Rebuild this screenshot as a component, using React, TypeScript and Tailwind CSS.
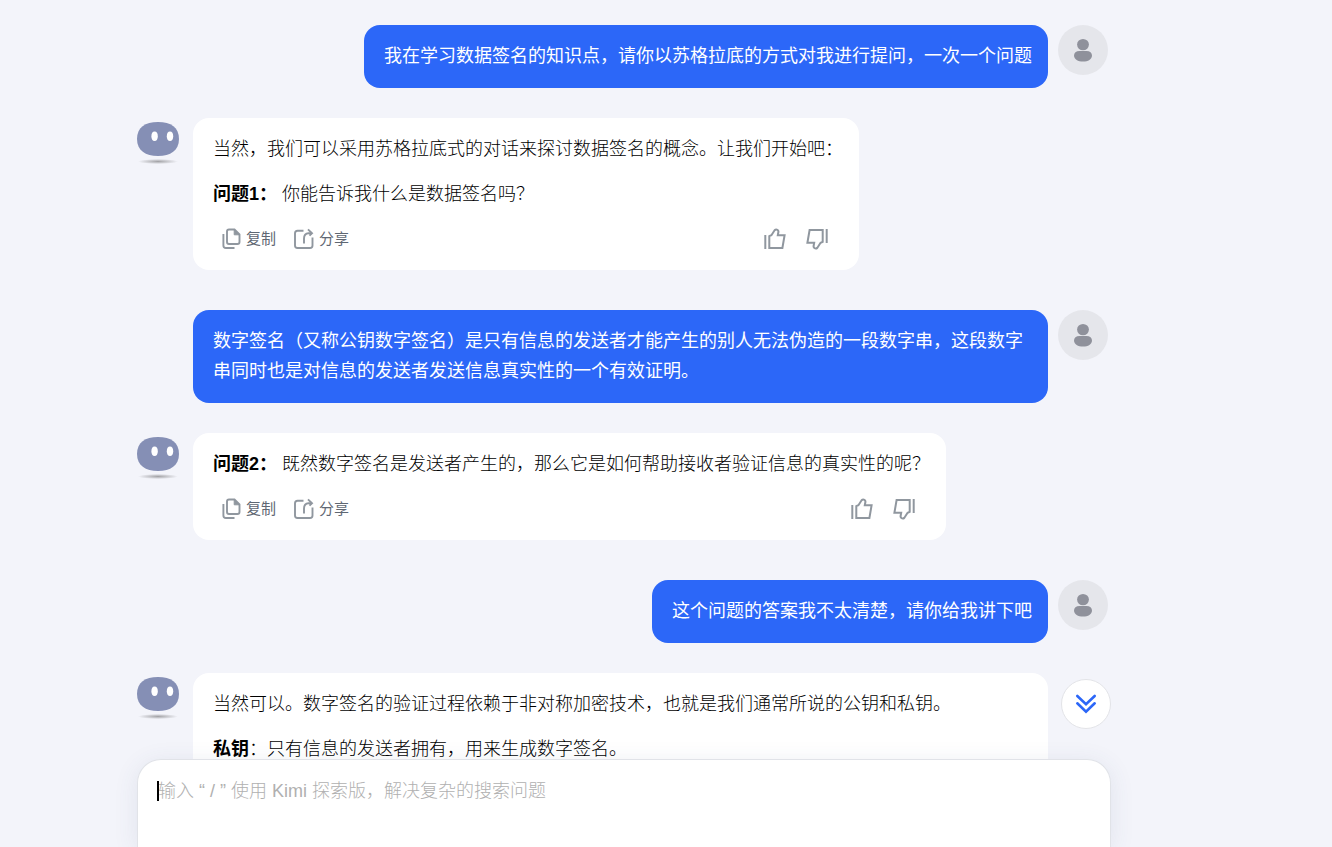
import React, { useState } from 'react';

type Message = {
  role: 'user' | 'bot';
  lines: { label?: string; text: string }[];
  streaming?: boolean;
};

const messages: Message[] = [
  { role: 'user', lines: [{ text: '我在学习数据签名的知识点，请你以苏格拉底的方式对我进行提问，一次一个问题' }] },
  {
    role: 'bot',
    lines: [
      { text: '当然，我们可以采用苏格拉底式的对话来探讨数据签名的概念。让我们开始吧：' },
      { label: '问题1：', text: ' 你能告诉我什么是数据签名吗？' },
    ],
  },
  {
    role: 'user',
    lines: [
      {
        text: '数字签名（又称公钥数字签名）是只有信息的发送者才能产生的别人无法伪造的一段数字串，这段数字串同时也是对信息的发送者发送信息真实性的一个有效证明。',
      },
    ],
  },
  {
    role: 'bot',
    lines: [{ label: '问题2：', text: ' 既然数字签名是发送者产生的，那么它是如何帮助接收者验证信息的真实性的呢？' }],
  },
  { role: 'user', lines: [{ text: '这个问题的答案我不太清楚，请你给我讲下吧' }] },
  {
    role: 'bot',
    streaming: true,
    lines: [
      { text: '当然可以。数字签名的验证过程依赖于非对称加密技术，也就是我们通常所说的公钥和私钥。' },
      { label: '私钥', text: '：只有信息的发送者拥有，用来生成数字签名。' },
    ],
  },
];

const BotAvatar = () => (
  <svg className="w-[42px] h-[48px] shrink-0" viewBox="0 0 42 48" fill="none">
    <defs>
      <radialGradient id="shade">
        <stop offset="0" stopColor="#8f8f92" stopOpacity="0.8" />
        <stop offset="1" stopColor="#8f8f92" stopOpacity="0" />
      </radialGradient>
    </defs>
    <ellipse cx="21" cy="43.5" rx="20" ry="2.6" fill="url(#shade)" />
    <path d="M21 4C34 4 42 9.5 42 21C42 32.5 33.5 38 21 38C8.5 38 0 32.5 0 21C0 9.5 8 4 21 4Z" fill="#858fb5" />
    <ellipse cx="17.6" cy="18.2" rx="3.2" ry="4.8" fill="#fff" />
    <ellipse cx="33" cy="18.2" rx="3.2" ry="4.8" fill="#fff" />
  </svg>
);

const UserAvatar = () => (
  <div className="w-[50px] h-[50px] shrink-0 rounded-full bg-[#e5e6eb]">
    <svg viewBox="0 0 50 50" fill="#8f919b">
      <ellipse cx="25" cy="19.6" rx="5.9" ry="5.7" />
      <path d="M21.5 26H28.5C32 26 34 27.8 34 30.5C34 34.3 30 36.6 25 36.6C20 36.6 16 34.3 16 30.5C16 27.8 18 26 21.5 26Z" />
    </svg>
  </div>
);

const CopyIcon = () => (
  <svg className="w-5 h-[22px]" viewBox="0 0 20 22" fill="none" stroke="#90979f" strokeWidth="1.9">
    <path d="M13.5 1.5H8Q6 1.5 6 3.5V14Q6 16 8 16H16.5Q18.5 16 18.5 14V6.5Z" />
    <path d="M13.2 1.5V6.8H18.5Z" fill="#90979f" strokeWidth="1" />
    <path d="M2.4 6V17.5Q2.4 20 4.9 20H13.5" />
  </svg>
);

const ShareIcon = () => (
  <svg className="w-5 h-[22px]" viewBox="0 0 20 22" fill="none" stroke="#90979f" strokeWidth="1.9">
    <path d="M9.5 2.8H3.5Q1 2.8 1 5.3V17.5Q1 20 3.5 20H16Q18.5 20 18.5 17.5V9.5" />
    <path d="M10 15.5V10.5Q10 5.5 14.5 5.2H18" />
    <path d="M14 1.4L18 5.2L15.5 7.6" />
  </svg>
);

const ThumbIcon = ({ down }: { down?: boolean }) => (
  <svg
    className={down ? 'w-[22px] h-[22px] rotate-180' : 'w-[22px] h-[22px]'}
    viewBox="0 0 22 22"
    fill="none"
    stroke="#90979f"
    strokeWidth="2"
  >
    <path d="M1.3 7V21" />
    <path d="M5.3 20V8.2L7.4 7.2L10.6 2.3Q12 0.8 13.6 2Q14.6 2.8 14.4 4L13.8 7.2H20.6L18.4 20Z" />
  </svg>
);

const ScrollDownIcon = () => (
  <svg className="w-6 h-6" viewBox="0 0 24 24" fill="none" stroke="#2c67f8" strokeWidth="2.6">
    <path d="M3.3 4L12 12.2L20.7 4M3.3 11.3L12 19.6L20.7 11.3" strokeLinecap="round" />
  </svg>
);

const Actions = () => {
  const [vote, setVote] = useState('');

  return (
    <div className="flex h-[30px] items-center justify-between pl-2 pr-[15px] text-[15px] font-normal text-[#5f6773]">
      <div className="flex gap-[18px]">
        <button className="flex items-center gap-[5px]">
          <CopyIcon /> 复制
        </button>
        <button className="flex items-center gap-[5px]">
          <ShareIcon /> 分享
        </button>
      </div>
      <div className="flex gap-5">
        <button aria-label="赞" aria-pressed={vote === 'up'} onClick={() => setVote('up')}>
          <ThumbIcon />
        </button>
        <button aria-label="踩" aria-pressed={vote === 'down'} onClick={() => setVote('down')}>
          <ThumbIcon down />
        </button>
      </div>
    </div>
  );
};

const UserMessage = ({ message }: { message: Message }) => (
  <div className="flex justify-end gap-[10px] pl-14 pr-[3px] mb-[30px]">
    <div className="rounded-2xl bg-[#2c67f8] pl-5 pr-4 pt-4 pb-[17px] font-normal text-white">
      {message.lines[0].text}
    </div>
    <UserAvatar />
  </div>
);

const BotMessage = ({ message }: { message: Message }) => (
  <div className="flex gap-[14px] pr-[63px] mb-10">
    <BotAvatar />
    <div
      className={`flex flex-col gap-[15px] rounded-2xl bg-white pl-5 pr-4 py-4 text-black ${message.streaming ? 'flex-1' : ''}`}
    >
      {message.lines.map((line, i) => (
        <p key={i}>
          {line.label && <strong className="font-bold">{line.label}</strong>}
          {line.text}
        </p>
      ))}
      {!message.streaming && <Actions />}
    </div>
  </div>
);

const App = () => {
  const [draft, setDraft] = useState('');

  return (
    <div className="flex h-screen flex-col overflow-hidden bg-[#f3f4fa] pr-[84px] font-['Liberation_Sans','Noto_Sans_CJK_SC',sans-serif] text-lg leading-[30px] font-light">
      <main className="min-h-0 flex-1 overflow-hidden">
        <div className="mx-auto max-w-[974px] pt-[25px]">
          {messages.map((message, i) =>
            message.role === 'user' ? <UserMessage key={i} message={message} /> : <BotMessage key={i} message={message} />
          )}
        </div>
      </main>

      <div className="relative mx-auto w-full max-w-[974px]">
        <button
          aria-label="回到底部"
          className="absolute right-0 bottom-full mb-[30px] flex h-[50px] w-[50px] items-center justify-center rounded-full border border-[#e3e4e8] bg-white"
        >
          <ScrollDownIcon />
        </button>
        <div className="relative h-[88px] rounded-t-3xl border border-b-0 border-[#e1e3e8] bg-white px-5 pt-4 shadow-[0_4px_24px_rgba(60,80,120,0.1)]">
          <span className="absolute left-[19px] top-[21px] h-5 w-[2px] bg-black" />
          <textarea
            aria-label="输入消息"
            rows={2}
            value={draft}
            onChange={(e) => setDraft(e.target.value)}
            placeholder="输入 “ / ” 使用 Kimi 探索版，解决复杂的搜索问题"
            className="block w-full resize-none bg-transparent caret-transparent outline-none placeholder:text-[#b0b0b0]"
          />
        </div>
      </div>
    </div>
  );
};

export default App;
